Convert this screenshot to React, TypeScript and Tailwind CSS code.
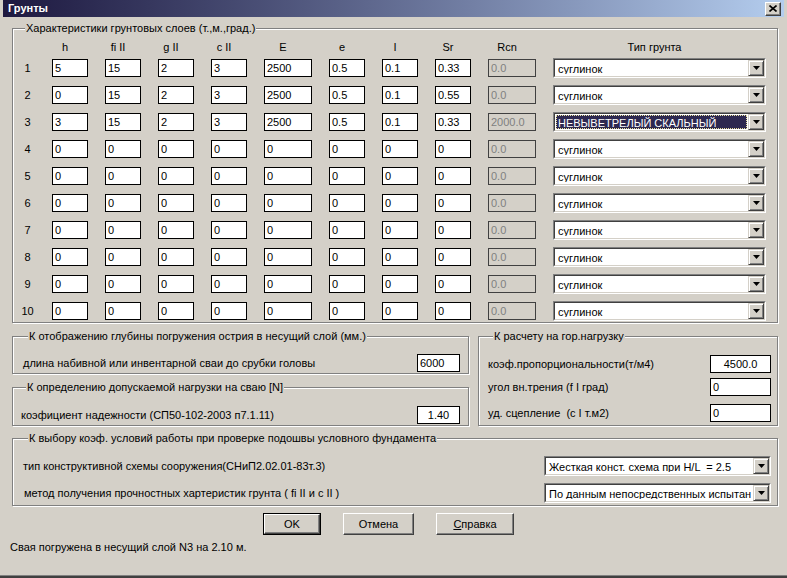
import React from 'react'

const BG = 'bg-[#d4d0c8]'

type Row = string[]

const rows: Row[] = [
  ['5', '15', '2', '3', '2500', '0.5', '0.1', '0.33', '0.0', 'суглинок'],
  ['0', '15', '2', '3', '2500', '0.5', '0.1', '0.55', '0.0', 'суглинок'],
  ['3', '15', '2', '3', '2500', '0.5', '0.1', '0.33', '2000.0', 'НЕВЫВЕТРЕЛЫЙ СКАЛЬНЫЙ'],
  ...Array.from({ length: 7 }, () => ['0', '0', '0', '0', '0', '0', '0', '0', '0.0', 'суглинок']),
]

const headers = ['h', 'fi II', 'g II', 'c II', 'E', 'e', 'I', 'Sr', 'Rcn', 'Тип грунта']

function Group({ title, className = '', children }: { title: string; className?: string; children: React.ReactNode }) {
  return (
    <fieldset className={`border border-[#808080] shadow-[inset_1px_1px_0_#fff,1px_1px_0_#fff] ${className}`}>
      <legend className={`ml-[5px] px-[1px] ${BG}`}>{title}</legend>
      {children}
    </fieldset>
  )
}

function Field({ value, width = 'w-[36px]', center = false, disabled = false }: { value: string; width?: string; center?: boolean; disabled?: boolean }) {
  return (
    <div
      className={`${width} h-[18px] border leading-[16px] px-[2px] whitespace-nowrap overflow-hidden ${
        disabled ? 'border-[#404040] text-[#808080] bg-[#d4d0c8]' : 'border-black bg-white'
      } ${center ? 'text-center' : ''}`}
    >
      {value}
    </div>
  )
}

function Arrow() {
  return (
    <div className="w-[16px] h-[16px] shrink-0 bg-[#d4d0c8] border border-t-[#d4d0c8] border-l-[#d4d0c8] border-r-[#404040] border-b-[#404040] shadow-[inset_1px_1px_0_#fff,inset_-1px_-1px_0_#808080] flex items-center justify-center">
      <svg width="7" height="4" viewBox="0 0 7 4">
        <path d="M0 0h7L3.5 4z" fill="#000" />
      </svg>
    </div>
  )
}

function Combo({ value, width = 'w-[213px]', selected = false }: { value: string; width?: string; selected?: boolean }) {
  return (
    <div className={`${width} h-[20px] border border-t-[#808080] border-l-[#808080] border-r-white border-b-white`}>
      <div className="h-full border border-t-[#404040] border-l-[#404040] border-r-[#d4d0c8] border-b-[#d4d0c8] bg-white flex items-center">
        <div className="flex-1 h-full p-[1px] min-w-0">
          <div
            className={`h-full leading-[14px] px-[1px] whitespace-pre overflow-hidden border border-dotted ${
              selected ? 'bg-[#2d2850] text-white border-[#e8e0a0]' : 'border-transparent'
            }`}
          >
            {value}
          </div>
        </div>
        <Arrow />
      </div>
    </div>
  )
}

function Button({ children, width, isDefault = false }: { children: React.ReactNode; width: string; isDefault?: boolean }) {
  return (
    <div className={`${width} h-[22px] ${isDefault ? 'border border-black' : ''}`}>
      <div className="h-full border border-t-white border-l-white border-r-[#404040] border-b-[#404040] shadow-[inset_-1px_-1px_0_#808080] flex items-center justify-center">
        {children}
      </div>
    </div>
  )
}

export default function App() {
  return (
    <div className={`w-[787px] h-[578px] ${BG} font-['Liberation_Sans',Arial,sans-serif] text-[11px] leading-[13px] text-black flex flex-col overflow-hidden`}>
      {/* Title bar */}
      <div className="mx-[3px] h-[17px] shrink-0 bg-gradient-to-r from-[#1e1940] to-[#b4cdee] flex items-center justify-between pl-[5px] pr-[3px]">
        <span className="text-white font-bold">Грунты</span>
        <div className="w-[16px] h-[14px] bg-[#d4d0c8] border border-t-white border-l-white border-r-[#404040] border-b-[#404040] shadow-[inset_-1px_-1px_0_#808080] flex items-center justify-center">
          <svg width="8" height="7" viewBox="0 0 8 7">
            <path d="M0.5 0.5l7 6M7.5 0.5l-7 6" stroke="#000" strokeWidth="1.6" />
          </svg>
        </div>
      </div>

      <div className="pl-[12px] pr-[9px] flex flex-col">
        {/* Soil layers */}
        <Group title="Характеристики грунтовых слоев (т.,м.,град.)" className="mt-[5px] pl-[7px] pb-[1px]">
          <div className="grid grid-cols-[15px_36px_36px_36px_36px_48px_36px_36px_36px_48px_213px] gap-x-[17px] mt-[6px]">
            <div />
            {headers.map((h) => (
              <div key={h} className="text-center pr-[10px] whitespace-nowrap">
                {h}
              </div>
            ))}
          </div>
          <div className="grid grid-cols-[15px_36px_36px_36px_36px_48px_36px_36px_36px_48px_213px] gap-x-[17px] gap-y-[7px] mt-[4px] items-center">
            {rows.map((r, i) => (
              <React.Fragment key={i}>
                <div className="text-center">{i + 1}</div>
                {r.slice(0, 8).map((v, j) => (
                  <Field key={j} value={v} width={j === 4 ? 'w-[48px]' : 'w-[36px]'} />
                ))}
                <Field value={r[8]} width="w-[48px]" disabled />
                <Combo value={r[9]} selected={i === 2} />
              </React.Fragment>
            ))}
          </div>
        </Group>

        <div className="flex gap-[9px] mt-[7px]">
          <div className="w-[457px] flex flex-col">
            <Group title="К отображению глубины погружения острия в несущий слой (мм.)" className="pl-[10px] pr-[8px] pb-[1px]">
              <div className="flex items-center justify-between mt-[11px]">
                <span>длина набивной или инвентарной сваи до срубки головы</span>
                <Field value="6000" width="w-[43px]" />
              </div>
            </Group>
            <Group title="К определению допускаемой нагрузки на сваю [N]" className="mt-[7px] pl-[8px] pr-[8px] pb-[1px]">
              <div className="flex items-center justify-between mt-[12px]">
                <span>коэфициент надежности (СП50-102-2003 п7.1.11)</span>
                <Field value="1.40" width="w-[43px]" center />
              </div>
            </Group>
          </div>

          <Group title="К расчету на гор.нагрузку" className="w-[300px] pl-[9px] pr-[6px] pb-[2px]">
            <div className="flex items-center justify-between mt-[12px]">
              <span>коэф.пропорциональности(т/м4)</span>
              <Field value="4500.0" width="w-[61px]" center />
            </div>
            <div className="flex items-center justify-between mt-[5px]">
              <span>угол вн.трения (f I град)</span>
              <Field value="0" width="w-[61px]" />
            </div>
            <div className="flex items-center justify-between mt-[8px]">
              <span>уд. сцепление&nbsp; (c I т.м2)</span>
              <Field value="0" width="w-[61px]" />
            </div>
          </Group>
        </div>

        <Group title="К выбору коэф. условий работы при проверке подошвы условного фундамента" className="mt-[6px] pl-[10px] pr-[6px] pb-[2px]">
          <div className="flex items-center justify-between mt-[11px]">
            <span>тип конструктивной схемы сооружения(СНиП2.02.01-83т.3)</span>
            <Combo value="Жесткая конст. схема при H/L  = 2.5" width="w-[227px]" />
          </div>
          <div className="flex items-center justify-between mt-[7px]">
            <span className="pl-[1px]">метод получения прочностных хартеристик грунта ( fi II и c II )</span>
            <Combo value="По данным непосредственных испытан" width="w-[227px]" />
          </div>
        </Group>

        <div className="flex mt-[7px] pl-[251px] gap-[22px]">
          <Button width="w-[58px]" isDefault>
            OK
          </Button>
          <Button width="w-[71px]">Отмена</Button>
          <Button width="w-[78px]">
            <span>
              <u>С</u>правка
            </span>
          </Button>
        </div>

        <div className="mt-[6px] -ml-[2px]">Свая погружена в несущий слой N3 на 2.10 м.</div>
      </div>

      <div className="mt-auto h-[3px] shrink-0 border-t border-[#808080] bg-[#404040]" />
    </div>
  )
}
